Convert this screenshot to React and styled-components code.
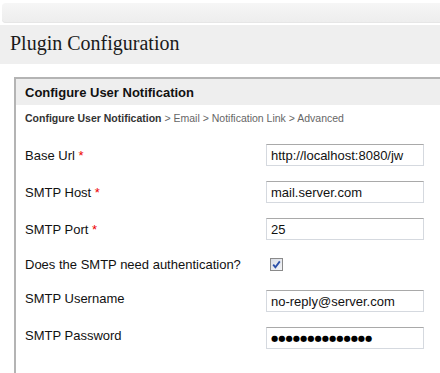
import styled, { createGlobalStyle } from 'styled-components'

const GlobalStyle = createGlobalStyle`
  html, body {
    margin: 0;
    padding: 0;
    background: #fff;
  }
  body {
    font-family: "Liberation Sans", Arial, sans-serif;
    color: #111;
    overflow: hidden;
  }
`

const Page = styled('div')`
  width: 440px;
  height: 373px;
  overflow: hidden;
`

const TopBar = styled('div')`
  margin: 3px 0 0 2px;
  height: 20px;
  border-radius: 4px 0 0 4px;
  background: linear-gradient(180deg, #f6f6f6, #ededed);
  box-shadow: inset 0 -1px 0 #e6e6e6;
`

const TitleBar = styled('div')`
  margin-top: 2px;
  height: 39px;
  background: #efefef;
  display: flex;
  align-items: center;
  padding-left: 10px;
`

const Title = styled('h1')`
  margin: 0 0 2px;
  font-family: "Liberation Serif", "Times New Roman", serif;
  font-weight: normal;
  font-size: 20px;
  color: #1a1a1a;
`

const Panel = styled('div')`
  margin: 13px 0 0 14px;
  border-top: 2px solid #b4b4b4;
  border-left: 2px solid #b4b4b4;
  height: 300px;
`

const PanelHeader = styled('div')`
  height: 26px;
  background: #eeeeee;
  display: flex;
  align-items: center;
  padding-left: 9px;
  font-size: 13px;
  font-weight: bold;
  color: #111;
`

const Crumbs = styled('div')`
  margin-top: 7px;
  padding-left: 9px;
  font-size: 10.5px;
  color: #666;
  line-height: 12px;
`

const CrumbCurrent = styled('span')`
  font-weight: bold;
  color: #333;
`

const Form = styled('div')`
  margin-top: 20px;
  padding-left: 9px;
  display: flex;
  flex-direction: column;
`

const Row = styled('div')`
  display: grid;
  grid-template-columns: 241px 158px;
  align-items: center;
  height: ${props => props.compact ? '13px' : '22px'};
  margin-top: ${props => props.gap || 0}px;
`

const Label = styled('label')`
  font-size: 13px;
  color: #111;
  margin-top: ${props => props.lift ? '-5px' : '0'};
`

const Required = styled('span')`
  color: #e00;
`

const TextInput = styled('input')`
  box-sizing: border-box;
  width: 158px;
  height: 22px;
  margin: 0;
  padding: 0 4px;
  font-family: "Liberation Sans", Arial, sans-serif;
  font-size: 13px;
  color: #111;
  background: #fff;
  border: 1px solid #d5d9df;
  border-top-color: #a9a9a9;
  border-radius: 0;
  outline: none;
`

const DotsInput = styled(TextInput)`
  font-family: "DejaVu Sans", sans-serif;
  font-size: 8.3px;
  letter-spacing: 0;
  color: #000;
`

const CheckBox = styled('span')`
  box-sizing: border-box;
  display: inline-flex;
  align-items: center;
  justify-content: center;
  width: 13px;
  height: 13px;
  margin-left: 4px;
  border: 1px solid #8a8a8a;
  background: linear-gradient(135deg, #d8dce4, #f4f5f8);
`

const fields = [
  { label: 'Base Url', required: true, value: 'http://localhost:8080/jw', gap: 0 },
  { label: 'SMTP Host', required: true, value: 'mail.server.com', gap: 15 },
  { label: 'SMTP Port', required: true, value: '25', gap: 15 }
]

export default function App () {
  return (
    <Page>
      <GlobalStyle />
      <TopBar />
      <TitleBar>
        <Title>Plugin Configuration</Title>
      </TitleBar>
      <Panel>
        <PanelHeader>Configure User Notification</PanelHeader>
        <Crumbs>
          <CrumbCurrent>Configure User Notification</CrumbCurrent> &gt; Email &gt; Notification Link &gt; Advanced
        </Crumbs>
        <Form>
          {fields.map(f => (
            <Row key={f.label} gap={f.gap}>
              <Label>{f.label} {f.required && <Required>*</Required>}</Label>
              <TextInput type='text' defaultValue={f.value} />
            </Row>
          ))}
          <Row compact gap={17}>
            <Label>Does the SMTP need authentication?</Label>
            <CheckBox>
              <svg width='9' height='9' viewBox='0 0 9 9'>
                <path d='M1.2 4.6 L3.4 7.2 L7.8 1.4' fill='none' stroke='#2a4fa8' strokeWidth='1.8' />
              </svg>
            </CheckBox>
          </Row>
          <Row gap={20}>
            <Label lift>SMTP Username</Label>
            <TextInput type='text' defaultValue='no-reply@server.com' />
          </Row>
          <Row gap={15}>
            <Label lift>SMTP Password</Label>
            <DotsInput type='text' readOnly value={'\u25CF'.repeat(14)} />
          </Row>
        </Form>
      </Panel>
    </Page>
  )
}
